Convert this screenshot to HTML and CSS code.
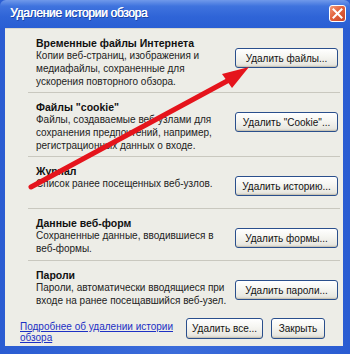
FILE: index.html
```html
<!DOCTYPE html>
<html lang="ru">
<head>
<meta charset="utf-8">
<title>Удаление истории обзора</title>
<link rel="stylesheet" href="styles.css">
</head>
<body>
<div class="window">
  <div class="titlebar">
    <span class="title">Удаление истории обзора</span>
    <span class="close" aria-label="Закрыть">
      <svg width="11" height="11" viewBox="0 0 11 11"><path d="M1.5 1.5 L9.5 9.5 M9.5 1.5 L1.5 9.5" stroke="#fff" stroke-width="2" stroke-linecap="square"/></svg>
    </span>
  </div>
  <div class="frame">
    <div class="content">
      <div class="section">
        <div class="text">
          <div class="heading">Временные файлы Интернета</div>
          <div class="desc">Копии веб-страниц, изображения и<br>медиафайлы, сохраненные для<br>ускорения повторного обзора.</div>
        </div>
        <button class="btn btn-wide">Удалить файлы...</button>
      </div>
      <div class="section">
        <div class="text">
          <div class="heading">Файлы "cookie"</div>
          <div class="desc">Файлы, создаваемые веб-узлами для<br>сохранения предпочтений, например,<br>регистрационных данных о входе.</div>
        </div>
        <button class="btn btn-wide">Удалить "Cookie"...</button>
      </div>
      <div class="section">
        <div class="text">
          <div class="heading">Журнал</div>
          <div class="desc">Список ранее посещенных веб-узлов.</div>
        </div>
        <button class="btn btn-wide">Удалить историю...</button>
      </div>
      <div class="section">
        <div class="text">
          <div class="heading">Данные веб-форм</div>
          <div class="desc">Сохраненные данные, вводившиеся в<br>веб-формы.</div>
        </div>
        <button class="btn btn-wide">Удалить формы...</button>
      </div>
      <div class="section section-last">
        <div class="text">
          <div class="heading">Пароли</div>
          <div class="desc">Пароли, автоматически вводящиеся при<br>входе на ранее посещавшийся веб-узел.</div>
        </div>
        <button class="btn btn-wide">Удалить пароли...</button>
      </div>
      <div class="footer">
        <a class="link" href="#">Подробнее об удалении истории<br>обзора</a>
        <div class="actions">
          <button class="btn btn-all">Удалить все...</button>
          <button class="btn btn-close">Закрыть</button>
        </div>
      </div>
    </div>
  </div>
  <svg class="arrow" width="350" height="354" viewBox="0 0 350 354">
    <line x1="31" y1="187" x2="229" y2="80" stroke="#e5141c" stroke-width="5" stroke-linecap="round"/>
    <polygon points="249,67 222,74 232,88" fill="#e5141c"/>
  </svg>
</div>
</body>
</html>
```

FILE: styles.css
```css
* { box-sizing: border-box; }

html, body {
  margin: 0;
  padding: 0;
  width: 350px;
  height: 354px;
  overflow: hidden;
  background: #2b5ed4;
}

.window {
  position: relative;
  width: 350px;
  height: 354px;
  display: flex;
  flex-direction: column;
  font-family: "Liberation Sans", Arial, sans-serif;
  font-size: 10px;
  color: #1a1a1a;
}

.titlebar {
  height: 28px;
  flex: none;
  display: flex;
  align-items: center;
  justify-content: space-between;
  padding: 0 4px 0 10px;
  background: linear-gradient(#7099ea 0%, #3f73de 22%, #2f64d7 60%, #2a5fd4 100%);
  border-radius: 6px 6px 0 0;
}

.title {
  color: #fff;
  font-size: 12px;
  letter-spacing: -0.3px;
  text-shadow: 0.4px 0 0 #fff, 1px 1px 0 #1a3f9c;
  margin-top: -2px;
}

.close {
  width: 17px;
  height: 17px;
  margin-top: -1px;
  border: 1px solid #fff;
  border-radius: 3px;
  background: linear-gradient(135deg, #f29a7c 0%, #e2623c 45%, #c9452a 100%);
  display: flex;
  align-items: center;
  justify-content: center;
}

.frame {
  flex: 1;
  padding: 0 7px 8px 5px;
  background: linear-gradient(90deg, #2a5cd2, #3b6cda 50%, #2a5cd2);
  display: flex;
}

.content {
  flex: 1;
  background: #edede7;
  display: flex;
  flex-direction: column;
  border-top: 1px solid #d9d8d0;
}

.section {
  display: flex;
  align-items: flex-start;
  margin: 0 3px 0 23px;
  padding: 8px 2px 4px 0;
  border-bottom: 1px solid #c9c8bf;
}

.section-last {
  border-bottom: none;
}

.text {
  flex: 1;
  padding-left: 8px;
}

.heading {
  font-weight: bold;
  font-size: 10.5px;
  line-height: 12px;
  color: #111;
}

.desc {
  line-height: 13px;
  white-space: nowrap;
  color: #222;
}

.btn {
  font-family: "Liberation Sans", Arial, sans-serif;
  font-size: 10px;
  color: #111;
  height: 20px;
  padding: 0;
  border: 1px solid #2a4f8c;
  border-radius: 3px;
  background: linear-gradient(#ffffff 0%, #f6f6f2 40%, #e9e8e1 85%, #d5d2c8 100%);
  box-shadow: inset 0 -1px 0 #c8c4b6, inset 0 1px 0 #fff;
}

.btn-wide {
  flex: none;
  width: 103px;
  margin: 11px 0 8px;
}

.footer {
  display: flex;
  align-items: flex-start;
  justify-content: space-between;
  padding: 5px 18px 0 15px;
}

.link {
  color: #1c30c4;
  text-decoration: underline;
  line-height: 11px;
  margin-top: 4px;
}

.actions {
  display: flex;
  gap: 8px;
  margin-top: 1px;
}

.btn-all {
  width: 77px;
  height: 21px;
}

.btn-close {
  width: 54px;
  height: 21px;
}

.arrow {
  position: absolute;
  left: 0;
  top: 0;
  pointer-events: none;
}
```
